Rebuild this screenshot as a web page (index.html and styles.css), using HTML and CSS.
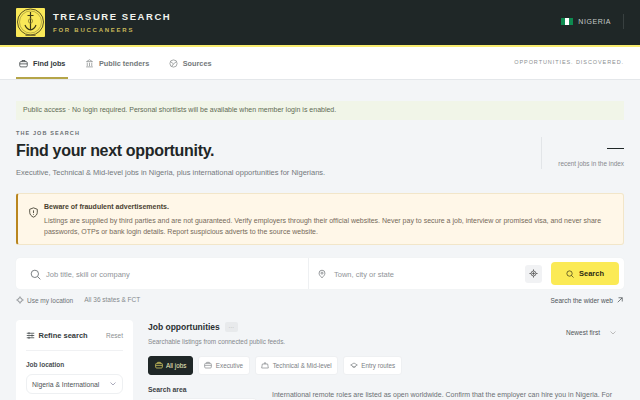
FILE: index.html
```html
<!DOCTYPE html>
<html lang="en">
<head>
<meta charset="utf-8">
<title>Treasure Search</title>
<link rel="stylesheet" href="styles.css">
</head>
<body>
<header class="masthead">
  <div class="brand">
    <svg class="logo" width="29" height="29" viewBox="0 0 29 29">
      <rect width="29" height="29" rx="1" fill="#f9e858" stroke="none"/>
      <circle cx="14.500" cy="14" r="13" fill="none" stroke="#5a5220" stroke-width="1"/>
      <circle cx="14.500" cy="14" r="11" fill="none" stroke="#7a7030" stroke-width=".5"/>
      <path d="M14.500 4v18M11.500 7.500h6M9 17c1 3 3 4.500 5.500 5 2.500-.5 4.500-2 5.500-5" fill="none" stroke="#3a3818" stroke-width="1.200"/>
      <circle cx="14.500" cy="13" r="2.200" fill="none" stroke="#8a7f30" stroke-width=".8"/>
      <rect x="9.500" y="26.500" width="10" height="1.500" fill="#7a7030" stroke="none"/>
    </svg>
    <div class="brand-text">
      <div class="brand-name">TREASURE SEARCH</div>
      <div class="brand-sub">FOR BUCCANEERS</div>
    </div>
  </div>
  <div class="locale">
    <span class="flag"><i></i></span>
    <span class="locale-name">NIGERIA</span>
  </div>
</header>

<nav class="tabs">
  <div class="tab-list">
    <a class="tab active">
      <svg width="9" height="9" viewBox="0 0 12 12"><rect x="1" y="3.500" width="10" height="7" rx="1.500"/><path d="M4 3.500V2h4v1.500M1 6.500h10"/></svg>
      Find jobs
    </a>
    <a class="tab">
      <svg width="9" height="9" viewBox="0 0 12 12"><path d="M2 3.500L6 1l4 2.500zM3 5v4.500M6 5v4.500M9 5v4.500M1.500 10.500h9"/></svg>
      Public tenders
    </a>
    <a class="tab">
      <svg width="9" height="9" viewBox="0 0 12 12"><circle cx="6" cy="6" r="4.800"/><path d="M2 3.500l4 3 4-3M3.500 10l2.500-3.500"/></svg>
      Sources
    </a>
  </div>
  <div class="tagline">OPPORTUNITIES. DISCOVERED.</div>
</nav>

<main class="page">
  <div class="notice">Public access · No login required. Personal shortlists will be available when member login is enabled.</div>

  <section class="hero">
    <div class="hero-copy">
      <div class="eyebrow">THE JOB SEARCH</div>
      <h1>Find your next opportunity.</h1>
      <p class="lede">Executive, Technical &amp; Mid-level jobs in Nigeria, plus international opportunities for Nigerians.</p>
    </div>
    <div class="stat">
      <div class="stat-dash"></div>
      <div class="stat-label">recent jobs in the index</div>
    </div>
  </section>

  <section class="warning">
    <svg class="warning-icon" width="11" height="11" viewBox="0 0 13 13"><path d="M6.500 1l4.500 1.700v3.500c0 2.800-2 4.800-4.500 5.800C4 11 2 9 2 6.200V2.700z"/><path d="M6.500 4v3.200M6.500 8.600v.8"/></svg>
    <div>
      <div class="warning-title">Beware of fraudulent advertisements.</div>
      <p class="warning-body">Listings are supplied by third parties and are not guaranteed. Verify employers through their official websites. Never pay to secure a job, interview or promised visa, and never share passwords, OTPs or bank login details. Report suspicious adverts to the source website.</p>
    </div>
  </section>

  <section class="searchbar">
    <div class="field field-job">
      <svg width="11" height="11" viewBox="0 0 12 12"><circle cx="5.300" cy="5.300" r="4"/><path d="M8.300 8.300l3 3"/></svg>
      <span>Job title, skill or company</span>
    </div>
    <div class="field field-place">
      <svg width="8" height="10" viewBox="0 0 11 12"><path d="M5.500 11.200C3 9 1.500 7 1.500 4.800a4 4 0 0 1 8 0c0 2.200-1.500 4.200-4 6.400z"/><circle cx="5.500" cy="4.800" r="1.400"/></svg>
      <span>Town, city or state</span>
    </div>
    <button class="locate">
      <svg width="9" height="9" viewBox="0 0 11 11"><circle cx="5.500" cy="5.500" r="3"/><circle cx="5.500" cy="5.500" r="1" fill="#555"/><path d="M5.500 .5v2M5.500 8.500v2M.5 5.500h2M8.500 5.500h2"/></svg>
    </button>
    <button class="search-btn">
      <svg width="8" height="8" viewBox="0 0 12 12"><circle cx="5.300" cy="5.300" r="4"/><path d="M8.300 8.300l3 3"/></svg>
      Search
    </button>
  </section>

  <div class="subsearch">
    <div class="subsearch-left">
      <span class="use-loc">
        <svg width="8" height="8" viewBox="0 0 11 11"><circle cx="5.500" cy="5.500" r="3"/><path d="M5.500 .5v2M5.500 8.500v2M.5 5.500h2M8.500 5.500h2"/></svg>
        Use my location
      </span>
      <span>All 36 states &amp; FCT</span>
    </div>
    <span class="wider">Search the wider web
      <svg width="6" height="6" viewBox="0 0 8 8"><path d="M1 7l6-6M2 1h5v5"/></svg>
    </span>
  </div>

  <div class="columns">
    <aside class="filters">
      <div class="filters-head">
        <span class="filters-title">
          <svg width="9" height="9" viewBox="0 0 12 12"><path d="M1 3h10M1 6h10M1 9h10M4 1.500v3M8 4.500v3M4 7.500v3"/></svg>
          Refine search
        </span>
        <span class="reset">Reset</span>
      </div>
      <label class="filter-label">Job location</label>
      <div class="select">Nigeria &amp; International
        <svg width="6" height="4" viewBox="0 0 6 4"><path d="M.5 .5L3 3l2.500-2.500"/></svg>
      </div>
    </aside>

    <section class="results">
      <div class="results-head">
        <div>
          <div class="results-title"><h2>Job opportunities</h2><span class="count">…</span></div>
          <div class="results-sub">Searchable listings from connected public feeds.</div>
        </div>
        <div class="sort">Newest first
          <svg width="6" height="4" viewBox="0 0 6 4"><path d="M.5 .5L3 3l2.500-2.500"/></svg>
        </div>
      </div>
      <div class="chips">
        <span class="chip active"><svg width="8" height="8" viewBox="0 0 12 12"><rect x="1" y="3.500" width="10" height="7" rx="1.500"/><path d="M4 3.500V2h4v1.500M1 6.500h10"/></svg>All jobs</span>
        <span class="chip"><svg width="8" height="8" viewBox="0 0 12 12"><rect x="1" y="3.500" width="10" height="7" rx="1.500"/><path d="M4 3.500V2h4v1.500M1 6.500h10"/></svg>Executive</span>
        <span class="chip"><svg width="8" height="8" viewBox="0 0 12 12"><path d="M1 10.500h10l-1-6H2zM4.500 4.500L6 2l1.500 2.500"/></svg>Technical &amp; Mid-level</span>
        <span class="chip"><svg width="8" height="8" viewBox="0 0 12 12"><path d="M1 6l5-3 5 3-5 3zM3 8l3 2 3-2"/></svg>Entry routes</span>
      </div>
      <div class="area">
        <div class="area-col">
          <div class="area-label">Search area</div>
          <div class="area-select"></div>
        </div>
        <p class="area-note">International remote roles are listed as open worldwide. Confirm that the employer can hire you in Nigeria. For</p>
      </div>
    </section>
  </div>
</main>
</body>
</html>
```
FILE: styles.css
```css
* { box-sizing: border-box; }
html, body { margin: 0; height: 400px; overflow: hidden; }
body { background: #f3f5f7; font-family: "Liberation Sans", Arial, sans-serif; color: #1f2727; }
svg { fill: none; stroke: currentColor; stroke-width: 1; flex: none; }
p, h1, h2 { margin: 0; }

.masthead { height: 47px; background: #1f2727; border-bottom: 2px solid #f9ec70; display: flex; justify-content: space-between; align-items: center; padding: 0 16px; }
.brand { display: flex; align-items: center; gap: 8px; margin-top: -1px; }
.brand-name { font-size: 9.500px; font-weight: 700; letter-spacing: 1.550px; color: #f1f3ee; line-height: 12px; }
.brand-sub { font-size: 6px; font-weight: 700; letter-spacing: 1.750px; color: #c9b95a; line-height: 8px; margin-top: 3px; }
.locale { display: flex; align-items: center; gap: 5px; height: 15px; padding-right: 12px; border-right: 1px solid #384040; margin-top: -2px; }
.flag { width: 12px; height: 7px; background: #0e8a50; display: flex; justify-content: center; }
.flag i { width: 4px; background: #fff; }
.locale-name { font-size: 7px; letter-spacing: .550px; color: #c5cac8; }

.tabs { height: 33px; background: #fff; border-bottom: 1px solid #e4e7ea; display: flex; justify-content: space-between; padding: 0 16px; }
.tab-list { display: flex; gap: 13.500px; }
.tab { display: flex; align-items: center; gap: 5px; height: 32px; font-size: 7.300px; font-weight: 700; color: #73787a; padding: 0 3px; }
.tab svg { color: #8a8e8e; }
.tab.active { color: #33393b; border-bottom: 2px solid #b5a548; padding-top: 2px; }
.tab.active svg { color: #33393b; }
.tagline { font-size: 5.500px; letter-spacing: .920px; color: #8b9092; line-height: 31px; }

.page { padding: 21px 16px 0; }
.notice { height: 19px; background: #f1f5e8; font-size: 7px; line-height: 18px; padding-left: 7px; color: #5f6b55; }

.hero { display: flex; justify-content: space-between; height: 51px; margin-top: 9px; }
.eyebrow { font-size: 5.500px; font-weight: 700; letter-spacing: 1.100px; color: #6b7072; line-height: 8px; }
h1 { font-size: 16px; font-weight: 700; letter-spacing: -.320px; line-height: 20px; margin-top: 4px; color: #1f2727; }
.lede { font-size: 7.500px; color: #73797d; line-height: 10px; margin-top: 7px; white-space: nowrap; }
.stat { width: 83px; height: 32px; margin-top: 8px; border-left: 1px solid #e2e5e8; display: flex; flex-direction: column; align-items: flex-end; }
.stat-dash { width: 17px; height: 1px; background: #1f2727; margin-top: 11px; }
.stat-label { font-size: 6.400px; color: #85898d; line-height: 9px; margin-top: 10px; }

.warning { height: 52px; margin-top: 13px; background: #fff7e8; border: 1px solid #f2e6c9; border-left: 2px solid #b9861f; border-radius: 3px; display: flex; gap: 5px; padding: 8px 0 0 10px; }
.warning-icon { color: #3d3a2c; margin-top: 5px; }
.warning-title { font-size: 7px; font-weight: 700; color: #4a4230; line-height: 10px; }
.warning-body { font-size: 7px; color: #75695a; line-height: 11px; margin-top: 3px; width: 570px; }

.searchbar { height: 31px; margin-top: 13px; background: #fff; border-radius: 4px; display: flex; align-items: center; padding-right: 5px; box-shadow: 0 0 1px #e4e7ea; }
.field { display: flex; align-items: center; height: 31px; font-size: 7.500px; color: #909498; padding-top: 1px; }
.field svg { color: #6f7478; }
.field-job { width: 293px; padding-left: 14px; gap: 5px; border-right: 1px solid #eef0f2; }
.field-place { flex: 1; padding-left: 9px; gap: 8px; }
.locate { width: 17px; height: 18px; border: 0; border-radius: 3px; background: #f1f2f4; color: #555; display: flex; align-items: center; justify-content: center; padding: 0; margin-right: 9px; }
.search-btn { width: 68px; height: 23px; border: 0; border-radius: 4px; background: #fbea55; color: #2d2a12; font: 700 7.500px "Liberation Sans", Arial, sans-serif; display: flex; align-items: center; justify-content: center; gap: 5px; padding: 0; }

.subsearch { display: flex; justify-content: space-between; align-items: center; height: 12px; margin-top: 5px; font-size: 6.500px; color: #85898d; }
.subsearch-left { display: flex; gap: 11px; }
.use-loc { display: flex; align-items: center; gap: 3px; color: #6f7478; }
.wider { display: flex; align-items: center; gap: 4px; color: #4f5457; padding-right: 1px; }

.columns { display: flex; gap: 15px; margin-top: 14px; }
.filters { width: 117px; height: 200px; background: #fff; border-radius: 4px; padding: 0 10px; flex: none; }
.filters-head { display: flex; justify-content: space-between; align-items: center; height: 31px; border-bottom: 1px solid #f0f1f3; }
.filters-title { display: flex; align-items: center; gap: 3.500px; font-size: 7.500px; font-weight: 700; color: #33393b; }
.reset { font-size: 6.500px; color: #8b8f92; }
.filter-label { display: block; font-size: 6.500px; font-weight: 700; color: #4a4f52; margin-top: 9px; line-height: 10px; }
.select { display: flex; justify-content: space-between; align-items: center; height: 20px; margin-top: 4px; padding: 0 6px 0 5px; border: 1px solid #eef0f2; border-radius: 6px; font-size: 6.800px; color: #4f5457; }
.select svg { color: #aab; }

.results { flex: 1; }
.results-head { display: flex; justify-content: space-between; align-items: flex-start; }
.results-title { display: flex; align-items: center; gap: 5px; height: 12px; margin-top: 1px; }
h2 { font-size: 8.500px; font-weight: 700; color: #2a3032; }
.count { width: 13px; height: 10px; background: #e8eaec; border-radius: 2px; font-size: 6px; color: #999; text-align: center; line-height: 8px; }
.results-sub { font-size: 6.400px; color: #85898d; margin-top: 4px; line-height: 9px; }
.sort { display: flex; align-items: center; gap: 10px; font-size: 6.500px; color: #4f5457; margin-top: 9px; padding-right: 8px; }
.sort svg { color: #bbb; }

.chips { display: flex; gap: 5px; margin-top: 9.500px; }
.chip { display: flex; align-items: center; gap: 3.500px; height: 19px; padding: 0 5.500px; background: #fff; border: 1px solid #eef0f2; border-radius: 3px; font-size: 6.300px; color: #7b8084; }
.chip.active { background: #1f2727; border-color: #1f2727; color: #f1efc0; }
.chip.active svg { color: #f5e66a; }

.area { display: flex; gap: 14px; margin-top: 10.500px; }
.area-col { width: 110px; flex: none; }
.area-label { font-size: 6.800px; font-weight: 700; color: #3d4245; line-height: 9px; }
.area-select { height: 16px; margin-top: 4px; background: #fff; border: 1px solid #eef0f2; border-radius: 5px; }
.area-note { font-size: 7px; line-height: 10px; color: #6b7074; white-space: nowrap; margin-top: 5px; }
```
